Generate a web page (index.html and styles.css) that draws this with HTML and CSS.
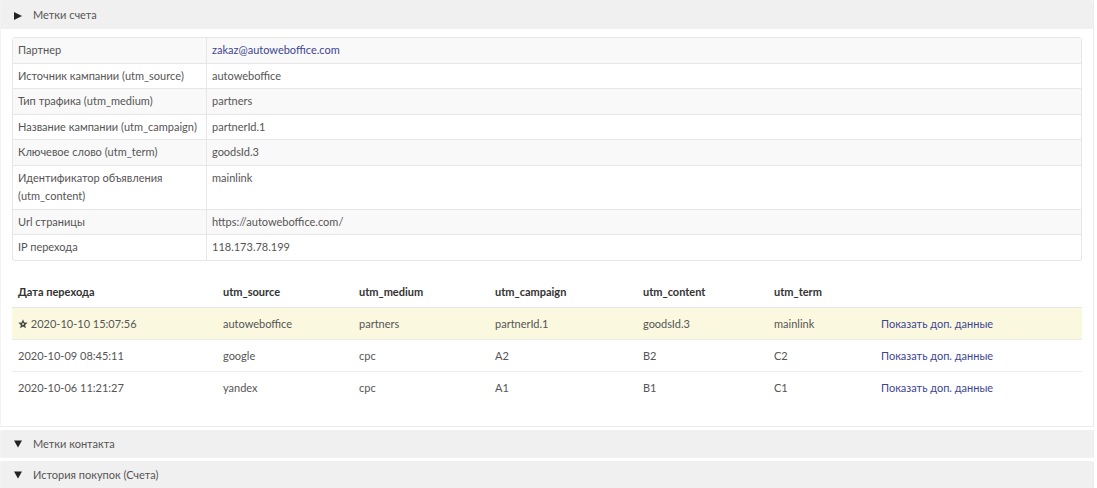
FILE: index.html
```html
<!DOCTYPE html>
<html lang="ru">
<head>
    <meta charset="UTF-8">
    <title>Метки счета</title>
    <link rel="stylesheet" href="styles.css">
</head>
<body>
    <div class="panel">
        <div class="panel-head"><svg class="arrow" viewBox="0 0 8 8" width="8" height="8"><path d="M0 0L8 4L0 8z"/></svg>Метки счета</div>
        <div class="panel-body">
            <table class="info">
                <tr><td class="key">Партнер</td><td><a href="#">zakaz@autoweboffice.com</a></td></tr>
                <tr><td class="key">Источник кампании (utm_source)</td><td>autoweboffice</td></tr>
                <tr><td class="key">Тип трафика (utm_medium)</td><td>partners</td></tr>
                <tr><td class="key">Название кампании (utm_campaign)</td><td>partnerId.1</td></tr>
                <tr><td class="key">Ключевое слово (utm_term)</td><td>goodsId.3</td></tr>
                <tr><td class="key">Идентификатор объявления (utm_content)</td><td>mainlink</td></tr>
                <tr><td class="key">Url страницы</td><td>https://autoweboffice.com/</td></tr>
                <tr><td class="key">IP перехода</td><td>118.173.78.199</td></tr>
            </table>

            <table class="visits">
                <thead>
                    <tr>
                        <th class="c1">Дата перехода</th>
                        <th class="c2">utm_source</th>
                        <th class="c3">utm_medium</th>
                        <th class="c4">utm_campaign</th>
                        <th class="c5">utm_content</th>
                        <th class="c6">utm_term</th>
                        <th class="c7"></th>
                    </tr>
                </thead>
                <tbody>
                    <tr class="current">
                        <td><svg class="star" viewBox="0 0 10 10" width="10" height="10"><path d="M5 0.3l1.3 3.1 3.4 0.3-2.6 2.2 0.8 3.3L5 7.4 2.1 9.2l0.8-3.3L0.3 3.7l3.4-0.3z"/><circle cx="5" cy="5" r="0.9" fill="#fbf8e0"/></svg> 2020-10-10 15:07:56</td>
                        <td>autoweboffice</td>
                        <td>partners</td>
                        <td>partnerId.1</td>
                        <td>goodsId.3</td>
                        <td>mainlink</td>
                        <td><a href="#">Показать доп. данные</a></td>
                    </tr>
                    <tr>
                        <td>2020-10-09 08:45:11</td>
                        <td>google</td>
                        <td>cpc</td>
                        <td>A2</td>
                        <td>B2</td>
                        <td>C2</td>
                        <td><a href="#">Показать доп. данные</a></td>
                    </tr>
                    <tr>
                        <td>2020-10-06 11:21:27</td>
                        <td>yandex</td>
                        <td>cpc</td>
                        <td>A1</td>
                        <td>B1</td>
                        <td>C1</td>
                        <td><a href="#">Показать доп. данные</a></td>
                    </tr>
                </tbody>
            </table>
        </div>
    </div>
    <div class="panel closed">
        <div class="panel-head"><svg class="arrow" viewBox="0 0 8 8" width="8" height="8"><path d="M0 0.5L8 0.5L4 7.5z"/></svg>Метки контакта</div>
    </div>
    <div class="panel closed">
        <div class="panel-head"><svg class="arrow" viewBox="0 0 8 8" width="8" height="8"><path d="M0 0.5L8 0.5L4 7.5z"/></svg>История покупок (Счета)</div>
    </div>
</body>
</html>
```

FILE: styles.css
```css
body {
    margin: 0;
    font-family: 'Lato', 'Liberation Sans', sans-serif;
    font-size: 11px;
    color: #555;
    background: #fff;
}
a {
    color: #3d4592;
    text-decoration: none;
}
.panel {
    width: 1094px;
    border-right: 1px solid #ececec;
    border-left: 1px solid #f2f2f2;
    margin-bottom: 3px;
    box-sizing: border-box;
}
.panel-head {
    height: 29px;
    line-height: 29px;
    background: #f0f0f0;
    padding-left: 13px;
    border-radius: 2px 2px 0 0;
}
.panel.closed .panel-head {
    height: 28px;
    line-height: 28px;
    border-radius: 2px;
}
.arrow {
    fill: #222;
    margin-right: 11px;
    vertical-align: -0.5px;
}
.panel-body {
    padding: 8px 11px 23px 11px;
    border-bottom: 1px solid #ececec;
}
.info {
    width: 1070px;
    border-collapse: separate;
    border-spacing: 0;
    border: 1px solid #e6e6e6;
    border-radius: 3px;
}
.info td {
    padding: 3px 5px;
    line-height: 18.5px;
    vertical-align: top;
    border-top: 1px solid #e6e6e6;
}
.info tr:first-child td {
    border-top: none;
}
.info tr:nth-child(odd) td {
    background: #f9f9f9;
}
.info td.key {
    width: 183px;
    border-right: 1px solid #e6e6e6;
}
.visits {
    width: 1070px;
    margin-top: 16px;
    border-collapse: collapse;
}
.visits th {
    text-align: left;
    font-weight: bold;
    color: #333;
    height: 30px;
    padding: 0 6px;
    border-bottom: 1px solid #e6e6e6;
}
.visits td {
    height: 31px;
    padding: 0 6px;
    border-top: 1px solid #ececec;
}
.visits tr.current td {
    background: #fbf8e0;
}
.c1 { width: 193px; }
.c2 { width: 124px; }
.c3 { width: 124px; }
.c4 { width: 136px; }
.c5 { width: 119px; }
.c6 { width: 95px; }
.star {
    fill: #444;
    vertical-align: -1px;
}
```
